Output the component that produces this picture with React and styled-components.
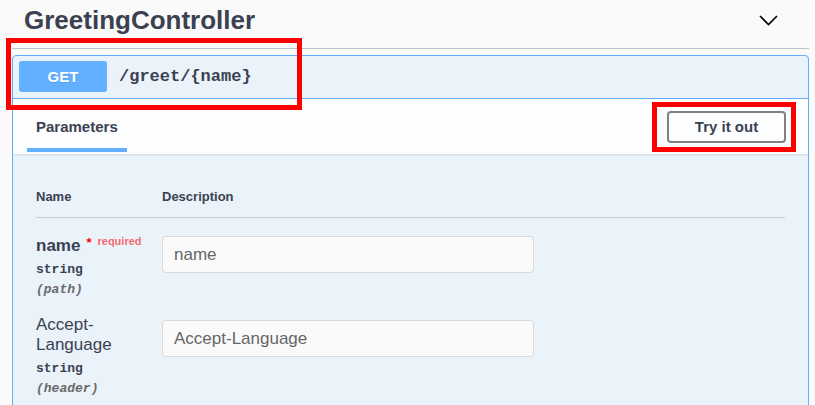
import styled, { createGlobalStyle } from "styled-components";

const GlobalStyle = createGlobalStyle`
  body {
    margin: 0;
    background: #fafafa;
    font-family: "Liberation Sans", Arial, sans-serif;
    color: #3b4151;
  }
`;

const Page = styled.div`
  position: relative;
  height: 405px;
  overflow: hidden;
  padding: 0 6px 0 12px;
`;

const TagHeader = styled.div`
  display: flex;
  align-items: flex-start;
  justify-content: space-between;
  height: 49px;
  box-sizing: border-box;
  padding: 5px 31px 0 12px;
  border-bottom: 1px solid rgba(59, 65, 81, 0.3);
`;

const Title = styled.h3`
  margin: 0;
  font-size: 26px;
  line-height: 30px;
  font-weight: 700;
  color: #3b4151;
`;

const Chevron = styled.svg`
  margin-top: 10px;
`;

const Opblock = styled.div`
  margin-top: 6px;
  border: 1px solid #61affe;
  border-radius: 4px;
  background: rgba(97, 175, 254, 0.1);
  min-height: 420px;
`;

const Summary = styled.div`
  display: flex;
  align-items: center;
  padding: 5px 6px 6px;
  border-bottom: 1px solid #61affe;
`;

const Method = styled.span`
  display: flex;
  align-items: center;
  justify-content: center;
  width: 88px;
  height: 31px;
  border-radius: 3px;
  background: #61affe;
  color: #fff;
  font-size: 15px;
  font-weight: 700;
  text-shadow: 0 1px 0 rgba(0, 0, 0, 0.1);
`;

const Path = styled.span`
  margin-left: 12px;
  font-family: "Liberation Mono", "Courier New", monospace;
  font-size: 17px;
  font-weight: 700;
  color: #3b4151;
`;

const SectionHeader = styled.div`
  display: flex;
  align-items: center;
  justify-content: space-between;
  height: 55px;
  box-sizing: border-box;
  padding: 0 22px 0 14px;
  background: rgba(255, 255, 255, 0.8);
  box-shadow: 0 1px 2px rgba(0, 0, 0, 0.1);
`;

const Tab = styled.div`
  align-self: stretch;
  box-sizing: border-box;
  margin-bottom: 2px;
  padding: 19px 9px 0;
  border-bottom: 4px solid #61affe;
  font-size: 15px;
  line-height: 17px;
  font-weight: 700;
`;

const TryButton = styled.button`
  width: 119px;
  height: 32px;
  border: 2px solid #808080;
  border-radius: 4px;
  background: transparent;
  font-family: "Liberation Sans", Arial, sans-serif;
  font-size: 15px;
  font-weight: 700;
  color: #3b4151;
`;

const Body = styled.div`
  padding: 35px 23px 0;
`;

const HeadRow = styled.div`
  display: grid;
  grid-template-columns: 126px 1fr;
  padding-bottom: 13px;
  border-bottom: 1px solid rgba(59, 65, 81, 0.2);
  font-size: 13px;
  line-height: 15px;
  font-weight: 700;
`;

const Row = styled.div`
  display: grid;
  grid-template-columns: 126px 1fr;
  height: 84px;
`;

const NameCell = styled.div`
  padding: 13px 10px 0 0;
`;

const ParamName = styled.div`
  font-size: 17px;
  line-height: 20px;
  font-weight: ${(p) => (p.$required ? 700 : 400)};
`;

const Star = styled.span`
  margin-left: 6px;
  color: #f00;
  font-size: 13px;
  vertical-align: 4px;
`;

const Required = styled.span`
  margin-left: 6px;
  font-size: 11px;
  font-weight: 700;
  color: rgba(255, 0, 0, 0.6);
  vertical-align: 6px;
`;

const Type = styled.div`
  padding-top: 5px;
  font-family: "Liberation Mono", "Courier New", monospace;
  font-size: 13px;
  line-height: 18px;
  font-weight: 700;
`;

const In = styled(Type)`
  padding-top: 2px;
  font-style: italic;
  color: #6b6b6b;
`;

const Input = styled.input`
  box-sizing: border-box;
  width: 372px;
  height: 37px;
  margin-top: 18px;
  padding: 0 11px;
  border: 1px solid #d9d9d9;
  border-radius: 4px;
  background: #fafafa;
  font-family: "Liberation Sans", Arial, sans-serif;
  font-size: 17px;
  color: #3b4151;
  outline: none;

  &::placeholder {
    color: #666;
  }
`;

const Mark = styled.div`
  position: absolute;
  box-sizing: border-box;
  border: 5px solid #f00;
  left: ${(p) => p.$x}px;
  top: ${(p) => p.$y}px;
  width: ${(p) => p.$w}px;
  height: ${(p) => p.$h}px;
  pointer-events: none;
`;

const params = [
  { name: "name", required: true, type: "string", in: "path" },
  { name: "Accept-Language", type: "string", in: "header" },
];

export default function App() {
  return (
    <>
      <GlobalStyle />
      <Page>
        <TagHeader>
          <Title>GreetingController</Title>
          <Chevron width="19" height="11" viewBox="0 0 19 11">
            <polyline
              points="1,1 9.5,9.5 18,1"
              fill="none"
              stroke="#000"
              strokeWidth="1.6"
            />
          </Chevron>
        </TagHeader>
        <Opblock>
          <Summary>
            <Method>GET</Method>
            <Path>/greet/{"{name}"}</Path>
          </Summary>
          <SectionHeader>
            <Tab>Parameters</Tab>
            <TryButton>Try it out</TryButton>
          </SectionHeader>
          <Body>
            <HeadRow>
              <div>Name</div>
              <div>Description</div>
            </HeadRow>
            {params.map((p) => (
              <Row key={p.name}>
                <NameCell>
                  <ParamName $required={p.required}>
                    {p.name}
                    {p.required && (
                      <>
                        <Star>*</Star>
                        <Required>required</Required>
                      </>
                    )}
                  </ParamName>
                  <Type>{p.type}</Type>
                  <In>({p.in})</In>
                </NameCell>
                <div>
                  <Input placeholder={p.name} />
                </div>
              </Row>
            ))}
          </Body>
        </Opblock>
        <Mark $x={6} $y={38} $w={296} $h={72} />
        <Mark $x={652} $y={102} $w={144} $h={50} />
      </Page>
    </>
  );
}
